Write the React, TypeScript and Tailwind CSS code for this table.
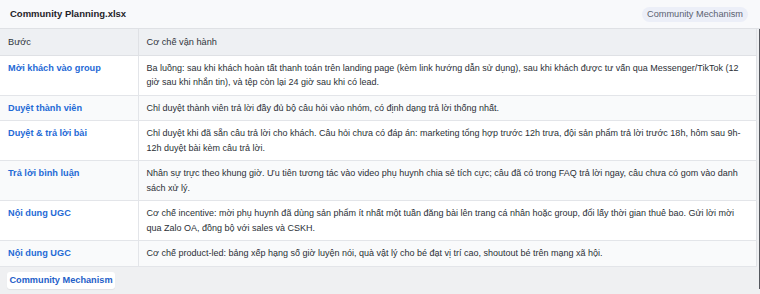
const rows = [
  {
    step: "Mời khách vào group",
    text: "Ba luồng: sau khi khách hoàn tất thanh toán trên landing page (kèm link hướng dẫn sử dụng), sau khi khách được tư vấn qua Messenger/TikTok (12 giờ sau khi nhắn tin), và tệp còn lại 24 giờ sau khi có lead.",
  },
  {
    step: "Duyệt thành viên",
    text: "Chỉ duyệt thành viên trả lời đầy đủ bộ câu hỏi vào nhóm, có định dạng trả lời thống nhất.",
  },
  {
    step: "Duyệt & trả lời bài",
    text: "Chỉ duyệt khi đã sẵn câu trả lời cho khách. Câu hỏi chưa có đáp án: marketing tổng hợp trước 12h trưa, đội sản phẩm trả lời trước 18h, hôm sau 9h-12h duyệt bài kèm câu trả lời.",
  },
  {
    step: "Trả lời bình luận",
    text: "Nhân sự trực theo khung giờ. Ưu tiên tương tác vào video phụ huynh chia sẻ tích cực; câu đã có trong FAQ trả lời ngay, câu chưa có gom vào danh sách xử lý.",
  },
  {
    step: "Nội dung UGC",
    text: "Cơ chế incentive: mời phụ huynh đã dùng sản phẩm ít nhất một tuần đăng bài lên trang cá nhân hoặc group, đổi lấy thời gian thuê bao. Gửi lời mời qua Zalo OA, đồng bộ với sales và CSKH.",
  },
  {
    step: "Nội dung UGC",
    text: "Cơ chế product-led: bảng xếp hạng số giờ luyện nói, quà vật lý cho bé đạt vị trí cao, shoutout bé trên mạng xã hội.",
  },
];

export default function App() {
  return (
    <div className="w-[760px] h-[294px] overflow-hidden bg-[#eff0f2] text-[9px] leading-[14.5px] text-[#2b2f36] font-['Liberation_Sans',Arial,sans-serif]">
      <div className="h-[29px] flex items-center justify-between pl-[10px] pr-[12px] bg-[#f8f9fb] border-b border-[#dfe1e5]">
        <span className="font-bold text-[9.5px] text-[#1f2329]">Community Planning.xlsx</span>
        <span className="h-[15px] w-[106px] flex items-center justify-center rounded-full bg-[#eceff8] text-[9.2px] text-[#5b6270]">
          Community Mechanism
        </span>
      </div>
      <div className="border-r border-[#55585e]">
        <table className="w-[757px] border-collapse bg-white border-r border-[#e1e3e7]">
          <colgroup>
            <col className="w-[138px]" />
            <col />
          </colgroup>
          <thead>
            <tr className="h-[26px] bg-[#eef0f3] text-left text-[9.2px] text-[#30353c]">
              <th className="font-normal px-[8px] border-r border-b border-[#dfe1e5]">Bước</th>
              <th className="font-normal px-[8px] border-b border-[#dfe1e5]">Cơ chế vận hành</th>
            </tr>
          </thead>
          <tbody>
            {rows.map((r, i) => (
              <tr key={i} className={i % 2 === 1 ? "bg-[#f9fafb]" : "bg-white"}>
                <td className="align-top pl-[8px] pr-[6px] py-[5px] border-r border-b border-[#e3e5e9] text-[9.2px] font-bold text-[#1f6ad6]">
                  {r.step}
                </td>
                <td className="align-top pl-[8px] pr-[6px] py-[5px] border-b border-[#e3e5e9]">
                  {r.text}
                </td>
              </tr>
            ))}
          </tbody>
        </table>
        <div className="pt-[5px] pl-[7px]">
          <button className="h-[17px] w-[108px] rounded-[3px] bg-white shadow-[0_1px_1px_rgba(0,0,0,0.06)] text-[9.2px] font-bold text-[#1f5fc9]">
            Community Mechanism
          </button>
        </div>
      </div>
    </div>
  );
}
